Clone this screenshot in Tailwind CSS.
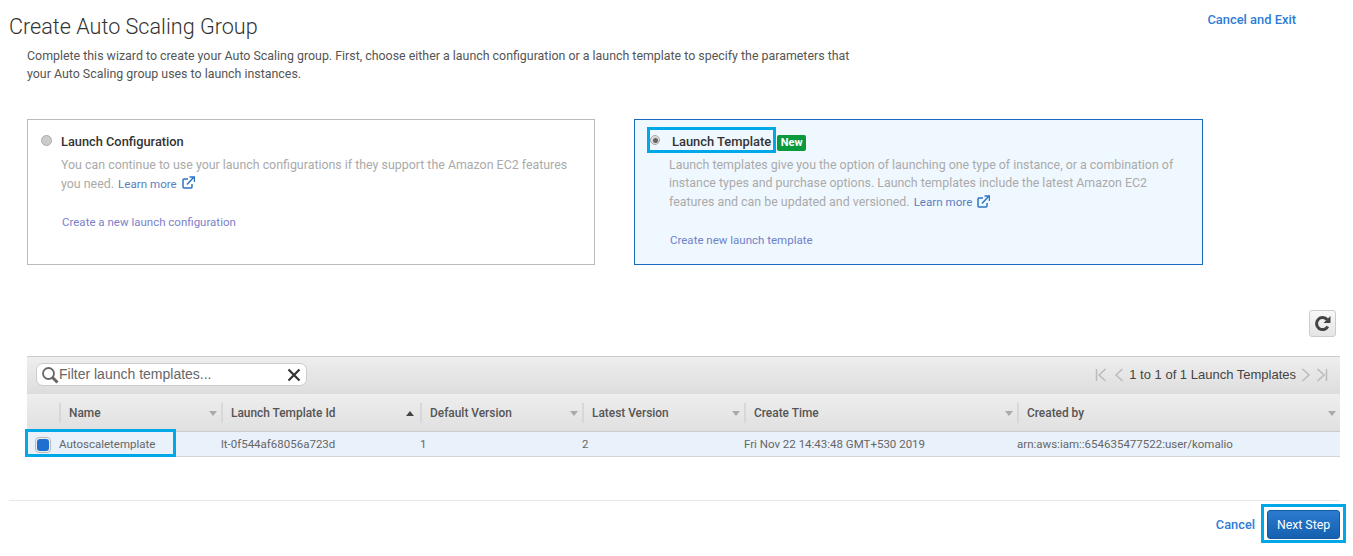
<!DOCTYPE html>
<html lang="en">
  <head>
    <meta charset="UTF-8" />
    <title>Create Auto Scaling Group</title>
    <script src="https://cdn.jsdelivr.net/npm/@tailwindcss/browser@4"></script>
  </head>
  <body class="bg-white font-['Roboto',sans-serif] text-[12.4px] text-[#444] overflow-hidden">
    <div class="relative w-[1353px] h-[556px]">
      <!-- Title -->
      <div class="flex justify-between pl-[9px] pr-[57px] pt-[14px] h-[47px]">
        <h1 class="text-[21.6px] leading-[26px] font-light text-[#333]">Create Auto Scaling Group</h1>
        <a class="text-[12.9px] leading-[12px] font-medium text-[#2e7cd6]">Cancel and Exit</a>
      </div>
      <p class="ml-[27px] w-[830px] leading-[18px] text-[#555]">
        Complete this wizard to create your Auto Scaling group. First, choose either a launch configuration or a launch template to specify the parameters that your Auto Scaling group uses to launch instances.
      </p>

      <!-- Option cards -->
      <div class="flex gap-[39px] ml-[27px] mt-[36px]">
        <div class="w-[568px] h-[146px] border border-[#bbb] pl-[13px] pt-[13px] flex gap-[9px]">
          <span class="mt-[2px] w-[11px] h-[11px] rounded-full bg-[#ccc] border border-[#aaa] shrink-0"></span>
          <div class="w-[520px]">
            <div class="text-[12.8px] font-medium text-[#333] leading-[18px]">Launch Configuration</div>
            <p class="mt-[5px] leading-[18.5px] text-[#aaa]">
              You can continue to use your launch configurations if they support the Amazon EC2 features you need.
              <a class="text-[11.6px] text-[#5a7fc0] ml-[1px]">Learn more</a>
              <svg class="inline ml-[2px] mb-[3px]" width="13" height="13" viewBox="0 0 13 13" fill="none" stroke="#2e73c4" stroke-width="1.5"><path d="M6 3H2a1 1 0 0 0-1 1v7a1 1 0 0 0 1 1h7a1 1 0 0 0 1-1V8"/><path d="M5 8.500 11.500 1.500M7.500 1h5v5"/></svg>
            </p>
            <a class="block ml-[1px] mt-[20px] leading-[18px] text-[11.5px] text-[#7a7fc8]">Create a new launch configuration</a>
          </div>
        </div>
        <div class="w-[569px] h-[146px] border border-[#1a6bbf] bg-[#f0f8ff] pl-[15px] pt-[12px] flex gap-[12px]">
          <span class="mt-[3px] w-[10px] h-[10px] rounded-full bg-[#ddd] border border-[#aaa] shrink-0 flex items-center justify-center">
            <span class="w-[5px] h-[5px] rounded-full bg-[#666]"></span>
          </span>
          <div class="w-[520px]">
            <div class="flex items-center gap-[6px] text-[12.9px] font-medium text-[#333] leading-[18px]">
              Launch Template
              <span class="mt-[3px] w-[29px] text-center h-[16px] rounded-[2px] bg-[#0a9a3c] text-white text-[11px] font-bold leading-[16px]">New</span>
            </div>
            <p class="-ml-[3px] mt-[4.8px] leading-[18.5px] text-[#aaa]">
              Launch templates give you the option of launching one type of instance, or a combination of instance types and purchase options. Launch templates include the latest Amazon EC2 features and can be updated and versioned.
              <a class="text-[11.6px] text-[#5a7fc0] ml-[1px]">Learn more</a>
              <svg class="inline ml-[2px] mb-[3px]" width="13" height="13" viewBox="0 0 13 13" fill="none" stroke="#2e73c4" stroke-width="1.5"><path d="M6 3H2a1 1 0 0 0-1 1v7a1 1 0 0 0 1 1h7a1 1 0 0 0 1-1V8"/><path d="M5 8.500 11.500 1.500M7.500 1h5v5"/></svg>
            </p>
            <a class="block -ml-[2px] mt-[20px] leading-[18px] text-[11.5px] text-[#6f82c8]">Create new launch template</a>
          </div>
        </div>
      </div>

      <!-- Refresh -->
      <div class="flex justify-end pr-[17px] mt-[45px]">
        <button class="w-[27px] h-[27px] rounded-[3px] border border-[#ccc] bg-gradient-to-b from-[#f8f8f8] to-[#e4e4e4] flex items-center justify-center">
          <svg width="19" height="19" viewBox="0 0 19 19" fill="none"><path d="M14.800 12.500A6 6 0 1 1 14.200 5.800" stroke="#444" stroke-width="3"/><path d="M17.500 2v7h-7z" fill="#444"/></svg>
        </button>
      </div>

      <!-- Table -->
      <div class="ml-[27px] w-[1313px] mt-[19px]">
        <div class="h-[38px] border-t border-[#ccc] border-b-2 border-b-[#ddd] bg-gradient-to-b from-[#eeeeee] to-[#dedede] flex items-center justify-between pl-[9px] pr-[12px]">
          <div class="w-[271px] h-[23px] rounded-[7px] border border-[#ccc] bg-white flex items-center pl-[4px] pr-[5px]">
            <svg width="18" height="18" viewBox="0 0 18 18" fill="none" stroke="#666"><circle cx="7.500" cy="7.500" r="5.500" stroke-width="1.800"/><path d="m11.500 11.500 5 5" stroke-width="3"/></svg>
            <span class="font-['Liberation_Sans',sans-serif] text-[14px] text-[#666] flex-1">Filter launch templates...</span>
            <svg width="14" height="14" viewBox="0 0 14 14" stroke="#333" stroke-width="2.200"><path d="m1.500 1.500 11 11M12.500 1.500l-11 11"/></svg>
          </div>
          <div class="flex items-center font-['Liberation_Sans',sans-serif] text-[13px] text-[#444] gap-[5px]">
            <svg width="12" height="14" viewBox="0 0 12 14" fill="none" stroke="#bbb" stroke-width="1.500"><path d="M1.500 1v12M10.500 1 4 7l6.500 6"/></svg>
            <svg class="ml-[2px]" width="10" height="14" viewBox="0 0 10 14" fill="none" stroke="#bbb" stroke-width="1.500"><path d="M8.500 1 2 7l6.500 6"/></svg>
            <span>1 to 1 of 1 Launch Templates</span>
            <svg width="10" height="14" viewBox="0 0 10 14" fill="none" stroke="#bbb" stroke-width="1.500"><path d="m1.500 1 6.500 6-6.500 6"/></svg>
            <svg width="12" height="14" viewBox="0 0 12 14" fill="none" stroke="#bbb" stroke-width="1.500"><path d="M10.500 1v12M1.500 1 8 7l-6.500 6"/></svg>
          </div>
        </div>
        <div class="grid grid-cols-[32px_162px_199px_162px_162px_273px_323px] h-[38px] bg-gradient-to-b from-[#eeeeee] to-[#e0e0e0] border-b border-[#ccc] font-medium text-[11.9px] text-[#555] items-center">
          <div></div>
          <div class="h-[20px] pt-[2px] border-l-2 border-[#d8d8d8] pl-[8px] pr-[4px] flex items-center justify-between">Name <svg width="8" height="5" viewBox="0 0 8 5" fill="#aaa"><path d="M0 0h8L4 5z"/></svg></div>
          <div class="h-[20px] pt-[2px] border-l-2 border-[#d8d8d8] pl-[8px] pr-[6px] flex items-center justify-between">Launch Template Id <svg width="8" height="5" viewBox="0 0 8 5" fill="#444"><path d="M0 5h8L4 0z"/></svg></div>
          <div class="h-[20px] pt-[2px] border-l-2 border-[#d8d8d8] pl-[8px] pr-[4px] flex items-center justify-between">Default Version <svg width="8" height="5" viewBox="0 0 8 5" fill="#aaa"><path d="M0 0h8L4 5z"/></svg></div>
          <div class="h-[20px] pt-[2px] border-l-2 border-[#d8d8d8] pl-[8px] pr-[4px] flex items-center justify-between">Latest Version <svg width="8" height="5" viewBox="0 0 8 5" fill="#aaa"><path d="M0 0h8L4 5z"/></svg></div>
          <div class="h-[20px] pt-[2px] border-l-2 border-[#d8d8d8] pl-[8px] pr-[4px] flex items-center justify-between">Create Time <svg width="8" height="5" viewBox="0 0 8 5" fill="#aaa"><path d="M0 0h8L4 5z"/></svg></div>
          <div class="h-[20px] pt-[2px] border-l-2 border-[#d8d8d8] pl-[8px] pr-[4px] flex items-center justify-between">Created by <svg width="8" height="5" viewBox="0 0 8 5" fill="#aaa"><path d="M0 0h8L4 5z"/></svg></div>
        </div>
        <div class="grid grid-cols-[32px_162px_199px_162px_162px_273px_323px] h-[25px] pt-[2px] bg-[#e9f1fb] border-b border-[#d5d5d5] text-[#666] text-[11.5px] items-center">
          <div class="pl-[8px]"><span class="w-[16px] h-[16px] rounded-[4px] border border-[#bbb] bg-[#eee] flex items-center justify-center"><span class="w-[12px] h-[12px] rounded-[3px] bg-[#1f6fd0]"></span></span></div>
          <div>Autoscaletemplate</div>
          <div>lt-0f544af68056a723d</div>
          <div>1</div>
          <div>2</div>
          <div>Fri Nov 22 14:43:48 GMT+530 2019</div>
          <div>arn:aws:iam::654635477522:user/komalio</div>
        </div>
      </div>

      <!-- Footer -->
      <div class="ml-[9px] w-[1331px] mt-[43px] border-t border-[#e8e8e8] pt-[9px] flex justify-end items-center gap-[12px]">
        <a class="text-[12.8px] font-medium text-[#2e7cd6]">Cancel</a>
        <button class="w-[73px] h-[29px] pt-[2px] rounded-[3px] border border-[#15599f] bg-gradient-to-b from-[#2a7bd0] to-[#1560b0] text-[12.3px] text-white">Next Step</button>
      </div>

      <!-- Tutorial highlight boxes -->
      <div class="absolute left-[647px] top-[127px] w-[129px] h-[26px] border-[3px] border-[#00a8e8]"></div>
      <div class="absolute left-[25px] top-[429px] w-[151px] h-[28px] border-[3px] border-[#00a8e8]"></div>
      <div class="absolute left-[1261px] top-[504px] w-[85px] h-[39px] border-[3px] border-[#00a8e8]"></div>
    </div>
  </body>
</html>
